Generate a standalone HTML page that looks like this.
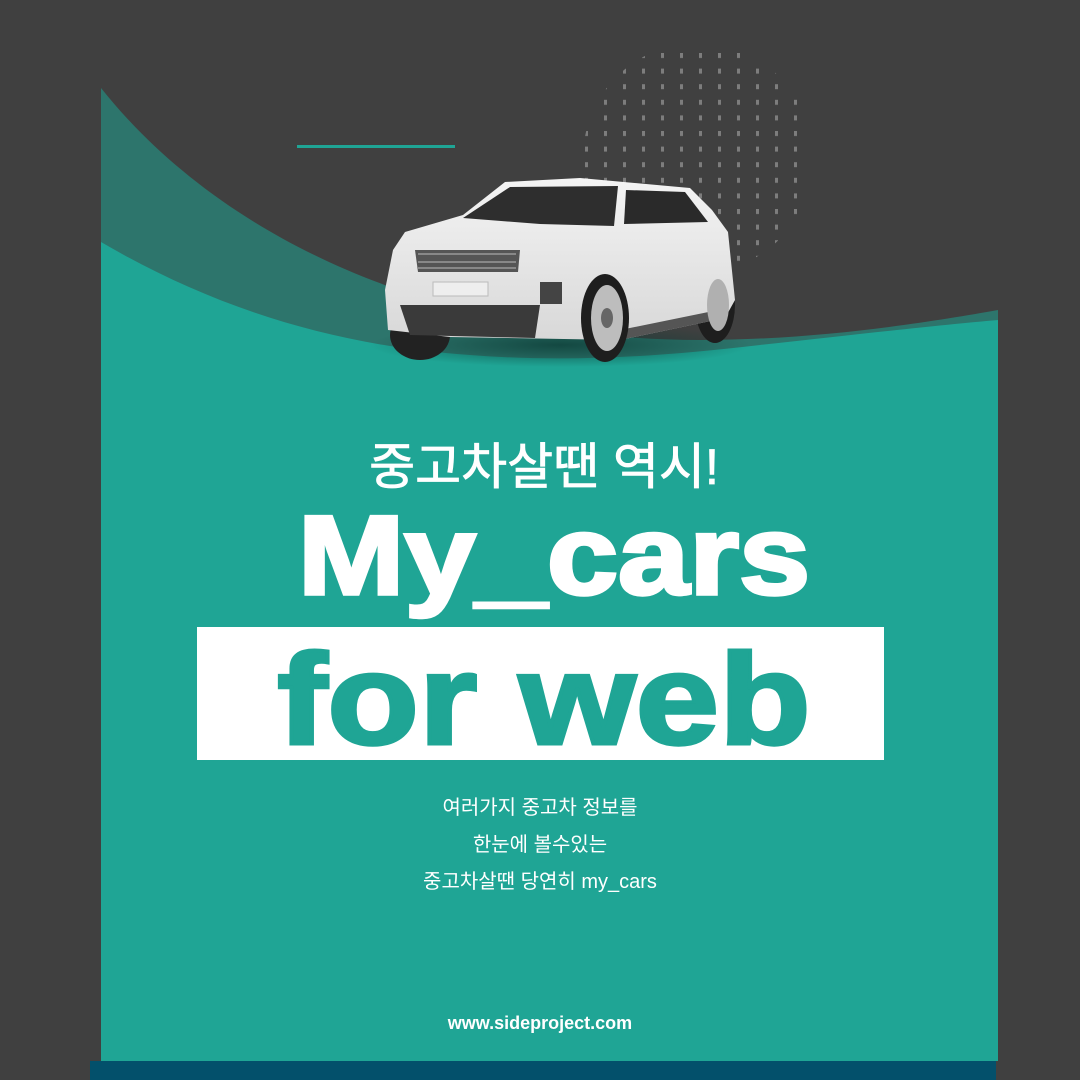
<!DOCTYPE html>
<html><head><meta charset="utf-8"><style>
html,body{margin:0;padding:0}
body{width:1080px;height:1080px;background:#404040;position:relative;overflow:hidden;font-family:"Liberation Sans","Noto Sans CJK KR",sans-serif}
.abs{position:absolute}
.c{left:0;width:1080px;text-align:center;color:#fff}
.t{display:inline-block;font-weight:bold}
</style></head><body>
<svg class="abs" style="left:0;top:0" width="1080" height="1080" viewBox="0 0 1080 1080">
<defs><clipPath id="circ"><circle cx="698" cy="158" r="115"/></clipPath>
<radialGradient id="sh" cx="0.5" cy="0.5" r="0.5"><stop offset="0" stop-color="#0d3d37" stop-opacity="0.8"/><stop offset="1" stop-color="#0d3d37" stop-opacity="0"/></radialGradient>
<linearGradient id="body" x1="0" y1="0" x2="0" y2="1"><stop offset="0" stop-color="#f4f4f4"/><stop offset="1" stop-color="#d8d8d8"/></linearGradient></defs>
<g clip-path="url(#circ)" fill="#7d7d7d">
<pattern id="dots" x="585" y="53" width="19" height="15.6" patternUnits="userSpaceOnUse"><rect x="0" y="0" width="3" height="5"/></pattern>
<rect x="570" y="40" width="260" height="240" fill="url(#dots)"/>
</g>
<path d="M101,88 C170,175 280,255 430,300 C520,325 600,340 700,340 C820,340 930,322 998,310 L998,1061 L101,1061 Z" fill="#2d756c"/>
<path d="M101,242 C200,300 320,345 470,355 C560,362 650,358 760,345 C860,334 940,325 998,320 L998,1061 L101,1061 Z" fill="#1fa595"/>
<rect x="297" y="145" width="158" height="3" fill="#1fa595"/>
<rect x="90" y="1061" width="906" height="19" fill="#03506b"/>
<rect x="197" y="627" width="687" height="133" fill="#fff"/>
<ellipse cx="560" cy="345" rx="190" ry="22" fill="url(#sh)"/>
<ellipse cx="420" cy="335" rx="30" ry="25" fill="#222"/>
<ellipse cx="715" cy="305" rx="20" ry="38" fill="#1e1e1e"/>
<path d="M388,330 L385,290 L393,250 L405,232 L463,215 L505,182 L580,178 L690,188 L712,210 L728,232 L735,300 L725,318 L620,340 L450,337 Z" fill="url(#body)"/>
<path d="M463,218 L510,187 L618,186 L614,226 L540,224 Z" fill="#2e2e2e"/>
<path d="M626,190 L685,192 L708,222 L624,224 Z" fill="#2a2a2a"/>
<path d="M415,250 L520,250 L518,272 L418,272 Z" fill="#555"/>
<path d="M418,254 H516 M418,262 H516 M418,268 H516" stroke="#999" stroke-width="1.5"/>
<path d="M400,305 L540,305 L535,338 L410,335 Z" fill="#3a3a3a"/>
<rect x="433" y="282" width="55" height="14" fill="#eee" stroke="#bbb"/>
<rect x="540" y="282" width="22" height="22" fill="#444"/>
<path d="M620,340 L725,318 L728,308 L620,330 Z" fill="#555"/>
<ellipse cx="605" cy="318" rx="24" ry="44" fill="#1e1e1e"/>
<ellipse cx="607" cy="318" rx="16" ry="33" fill="#bdbdbd"/>
<ellipse cx="607" cy="318" rx="6" ry="10" fill="#666"/>
<ellipse cx="718" cy="305" rx="11" ry="26" fill="#b0b0b0"/>
</svg>
<div class="abs c" style="top:437px;font-size:50px;font-weight:normal;line-height:60px;-webkit-text-stroke:0.8px #fff;padding-left:4px">중고차살땐 역시!</div>
<div class="abs c" style="top:486px;line-height:140px"><span class="t" style="font-size:128px;-webkit-text-stroke:4px #fff;transform:scale(1,0.88);transform-origin:50% 50%;margin-left:28px">My_cars</span></div>
<div class="abs c" style="top:619px;line-height:160px;color:#1fa595"><span class="t" style="font-size:150px;-webkit-text-stroke:4px #1fa595;transform:scale(1,0.86);transform-origin:50% 50%;margin-left:8px">for web</span></div>
<div class="abs c" style="top:790px;font-size:20px;line-height:37px">여러가지 중고차 정보를<br>한눈에 볼수있는<br>중고차살땐 당연히 my_cars</div>
<div class="abs c" style="top:1013px;font-size:18px;font-weight:bold">www.sideproject.com</div>
</body></html>
